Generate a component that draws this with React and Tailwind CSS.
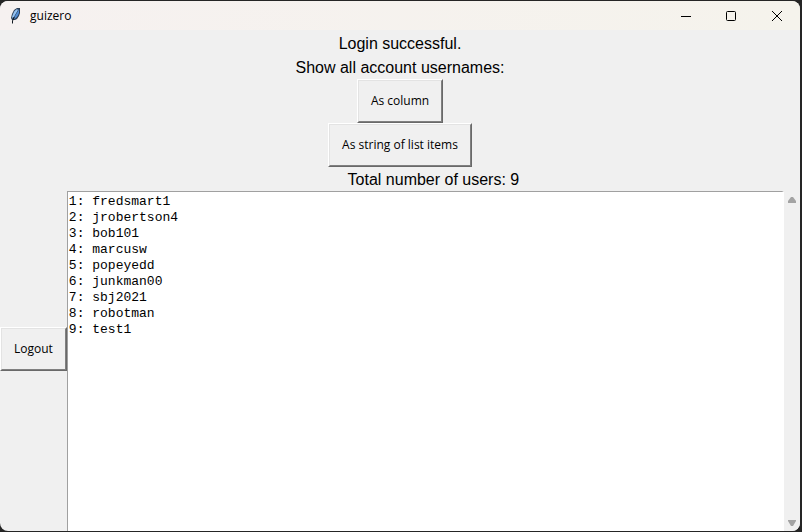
import React from "react";

const users = [
  "fredsmart1",
  "jrobertson4",
  "bob101",
  "marcusw",
  "popeyedd",
  "junkman00",
  "sbj2021",
  "robotman",
  "test1",
];

const RaisedButton = ({ children }) => (
  <button
    type="button"
    className="border border-t-white border-l-white border-r-[#696969] border-b-[#696969] bg-[#f0f0f0] font-['Open_Sans',sans-serif] text-[12px] leading-4 text-black"
  >
    <span className="block border border-t-[#e3e3e3] border-l-[#e3e3e3] border-r-[#808080] border-b-[#808080] p-3">
      {children}
    </span>
  </button>
);

const FeatherIcon = () => (
  <svg width="16" height="16" viewBox="0 0 16 16" aria-hidden="true">
    <path d="M9 0h3v5l-1 3-2 3-2 1H4l-1-2 1-4 2-4z" fill="#2c3e55" />
    <path d="M9 1 6.500 3 5 6 4 9l1 2 2-4 3-5z" fill="#94c2f2" />
    <path d="M11 1v4l-1 2.500L8 10l-2 1 1.500-4L10 3z" fill="#4f8ad2" />
    <path d="M4.500 15.500V13L6 9" fill="none" stroke="#101820" strokeWidth="1" />
  </svg>
);

const TitleBar = () => (
  <header className="flex h-[29px] items-center bg-gradient-to-r from-[#f6f1f0] to-[#f5f3ec] pl-2">
    <FeatherIcon />
    <h1 className="grow pl-[6px] font-['Open_Sans',sans-serif] text-[12px] leading-4 text-black">guizero</h1>
    <button type="button" aria-label="Minimize" className="flex h-full w-11 items-center justify-center">
      <svg width="12" height="12" viewBox="0 0 12 12">
        <path d="M1 6.500h10" stroke="#000" fill="none" />
      </svg>
    </button>
    <button type="button" aria-label="Maximize" className="flex h-full w-[46px] items-center justify-center">
      <svg width="12" height="12" viewBox="0 0 12 12">
        <rect x="1.500" y="1.500" width="9" height="9" rx="1" stroke="#000" fill="none" />
      </svg>
    </button>
    <button type="button" aria-label="Close" className="flex h-full w-[46px] items-center justify-center">
      <svg width="12" height="12" viewBox="0 0 12 12">
        <path d="m1 1 10 10M11 1 1 11" stroke="#000" fill="none" />
      </svg>
    </button>
  </header>
);

const ScrollBar = () => (
  <div className="flex w-4 flex-col justify-between bg-[#f0f0f0]">
    <button type="button" aria-label="Scroll up" className="flex h-[18px] items-center justify-center">
      <svg width="8" height="6" viewBox="0 0 8 6">
        <path d="M3 0h2l3 4v2H0V4z" fill="#a3a3a3" />
      </svg>
    </button>
    <button type="button" aria-label="Scroll down" className="flex h-4 items-center justify-center">
      <svg width="8" height="6" viewBox="0 0 8 6">
        <path d="M0 0h8v1L5 6H3L0 1z" fill="#a3a3a3" />
      </svg>
    </button>
  </div>
);

const App = () => {
  return (
    <div className="flex min-h-screen flex-col bg-[#252525] pt-px pr-[2px] pb-px">
      <div className="flex grow flex-col overflow-hidden rounded-lg bg-[#f0f0f0]">
        <TitleBar />

        {/* Messages and display options */}
        <main className="flex grow flex-col pt-px">
          <div className="flex flex-col items-center font-['Liberation_Sans',Arial,sans-serif] text-[16px] leading-[22px] text-black">
            <p className="pt-[2px]">Login successful.</p>
            <p className="pt-[2px]">Show all account usernames:</p>
            <RaisedButton>As column</RaisedButton>
            <RaisedButton>As string of list items</RaisedButton>
          </div>

          {/* Logout next to the user list */}
          <div className="flex grow">
            <div className="flex items-center">
              <RaisedButton>Logout</RaisedButton>
            </div>
            <div className="flex grow flex-col">
              <label
                htmlFor="users"
                className="pt-[2px] text-center font-['Liberation_Sans',Arial,sans-serif] text-[16px] leading-[22px] text-black"
              >
                Total number of users: {users.length}
              </label>
              <div className="flex grow">
                <textarea
                  id="users"
                  spellCheck={false}
                  defaultValue={users.map((name, i) => `${i + 1}: ${name}`).join("\n")}
                  className="grow resize-none overflow-hidden border-t border-r-2 border-l border-t-[#a0a0a0] border-r-white border-l-[#a0a0a0] bg-white px-px py-[2px] font-['Liberation_Mono','Courier_New',monospace] text-[13px] leading-4 text-black outline-none"
                />
                <ScrollBar />
              </div>
            </div>
          </div>
        </main>
      </div>
    </div>
  );
};

export default App;
